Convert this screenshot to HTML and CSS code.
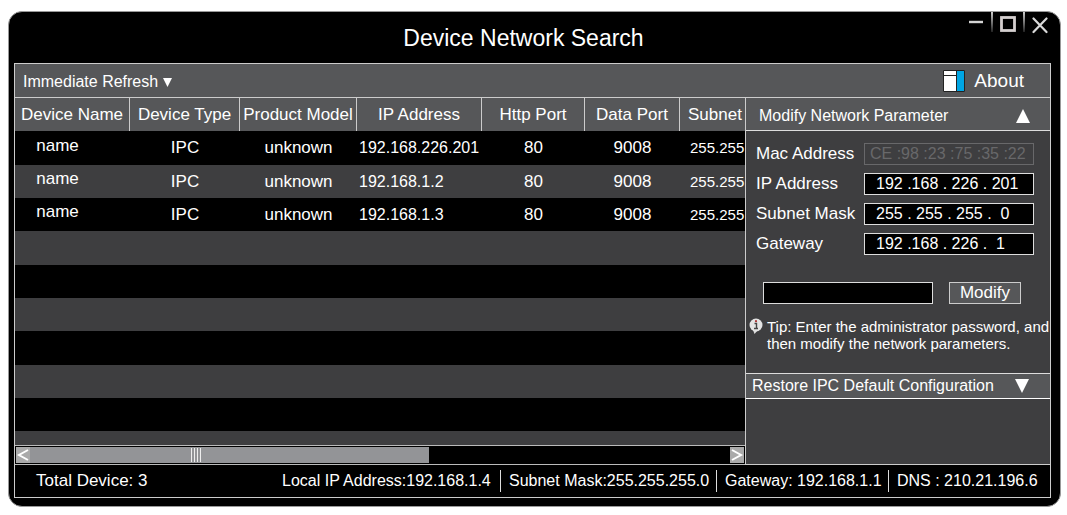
FILE: index.html
```html
<!DOCTYPE html>
<html lang="en">
<head>
<meta charset="utf-8">
<title>Device Network Search</title>
<link rel="stylesheet" href="styles.css">
</head>
<body>
<div class="window">
  <header class="titlebar">
    <h1 class="title">Device Network Search</h1>
    <div class="controls">
      <button class="control" aria-label="Minimize"><svg width="16" height="22" viewBox="0 0 16 22"><path d="M1 10h14" stroke="#d4d4d4" stroke-width="2.4"/></svg></button>
      <span class="divider"></span>
      <button class="control" aria-label="Maximize"><svg width="16" height="22" viewBox="0 0 16 22"><rect x="1.5" y="5.5" width="13" height="13" fill="none" stroke="#d4cfcf" stroke-width="2.8"/></svg></button>
      <span class="divider"></span>
      <button class="control" aria-label="Close"><svg width="16" height="22" viewBox="0 0 16 22"><path d="M1.500 6.500l13 13.500M14.500 6.500l-13 13.500" stroke="#d8d8d8" stroke-width="2.2" stroke-linecap="round"/></svg></button>
    </div>
  </header>
  <main class="frame">
    <div class="toolbar">
      <button class="refresh">Immediate Refresh <svg width="9" height="9" viewBox="0 0 9 9"><path d="M0 0h9L4.500 9z" fill="#fff"/></svg></button>
      <button class="about"><svg width="22" height="22" viewBox="0 0 22 22"><path d="M.5.5h21v21H.5z" fill="#fff" stroke="#222"/><path d="M14 1h7v20h-7z" fill="#00a5e3"/><path d="M13.500 1v20M1 5.500h12" stroke="#222"/></svg>About</button>
    </div>
    <div class="content">
      <section class="devices">
        <div class="table-view">
          <table class="table">
            <colgroup><col class="c-name"><col class="c-type"><col class="c-model"><col class="c-ip"><col class="c-http"><col class="c-data"><col class="c-mask"></colgroup>
            <thead><tr><th>Device Name</th><th>Device Type</th><th>Product Model</th><th>IP Address</th><th>Http Port</th><th>Data Port</th><th class="mask">Subnet</th></tr></thead>
            <tbody>
              <tr><td class="name">name</td><td>IPC</td><td>unknown</td><td class="ip">192.168.226.201</td><td>80</td><td>9008</td><td class="mask">255.255.255.0</td></tr>
              <tr><td class="name">name</td><td>IPC</td><td>unknown</td><td class="ip">192.168.1.2</td><td>80</td><td>9008</td><td class="mask">255.255.255.0</td></tr>
              <tr><td class="name">name</td><td>IPC</td><td>unknown</td><td class="ip">192.168.1.3</td><td>80</td><td>9008</td><td class="mask">255.255.255.0</td></tr>
              <tr><td colspan="7"></td></tr>
              <tr><td colspan="7"></td></tr>
              <tr><td colspan="7"></td></tr>
              <tr><td colspan="7"></td></tr>
              <tr><td colspan="7"></td></tr>
              <tr><td colspan="7"></td></tr>
            </tbody>
          </table>
        </div>
        <div class="scrollbar">
          <button class="arrow" aria-label="Scroll left"><svg width="14" height="16" viewBox="0 0 14 16"><path d="M12 3L3 8l9 5" fill="none" stroke="#fff" stroke-width="2"/></svg></button>
          <div class="track"><div class="thumb"><svg width="10" height="14" viewBox="0 0 10 14"><path d="M.5 0v14M3.500 0v14M6.500 0v14M9.500 0v14" stroke="#eee"/></svg></div></div>
          <button class="arrow" aria-label="Scroll right"><svg width="14" height="16" viewBox="0 0 14 16"><path d="M2 3l9 5-9 5" fill="none" stroke="#fff" stroke-width="2"/></svg></button>
        </div>
      </section>
      <aside class="side">
        <button class="panel-head modify-head">Modify Network Parameter<svg width="14" height="14" viewBox="0 0 14 14"><path d="M7 0l7 14H0z" fill="#fff"/></svg></button>
        <form class="form">
          <div class="fields">
            <label for="mac">Mac Address</label><input class="field mac" id="mac" value="CE :98 :23 :75 :35 :22" disabled>
            <label for="ip">IP Address</label><input class="field" id="ip" value="192 .168 . 226 . 201">
            <label for="mask">Subnet Mask</label><input class="field" id="mask" value="255 . 255 . 255 .  0">
            <label for="gateway">Gateway</label><input class="field" id="gateway" value="192 .168 . 226 .  1">
          </div>
          <div class="submit">
            <input class="field password" type="password" aria-label="Administrator password">
            <button class="modify" type="button">Modify</button>
          </div>
          <div class="tip">
            <svg width="14" height="17" viewBox="0 0 14 17"><path d="M4 12l1.500 4L9 12z" fill="#ddd"/><circle cx="7" cy="7" r="6.500" fill="#e4e4e4"/><path d="M5.500 5.500h2v5M5 10.500h4" fill="none" stroke="#444" stroke-width="1.400"/><circle cx="7" cy="3.200" r="1.100" fill="#a33"/></svg>
            <p class="tip-text">Tip: Enter the administrator password, and<br>then modify the network parameters.</p>
          </div>
        </form>
        <button class="panel-head restore-head">Restore IPC Default Configuration<svg width="14" height="14" viewBox="0 0 14 14"><path d="M0 0h14L7 14z" fill="#fff"/></svg></button>
      </aside>
    </div>
    <footer class="status">
      <span class="total">Total Device: 3</span>
      <span class="item">Local IP Address:192.168.1.4</span>
      <span class="item">Subnet Mask:255.255.255.0</span>
      <span class="item">Gateway: 192.168.1.1</span>
      <span class="item">DNS : 210.21.196.6</span>
    </footer>
  </main>
</div>
</body>
</html>
```
FILE: styles.css
```css
* { box-sizing: border-box; }

body {
  margin: 0;
  padding: 11px 6px 8px 8px;
  min-height: 100vh;
  display: flex;
  background: #fff;
  color: #fff;
  font: 16px/20px "Liberation Sans", Arial, sans-serif;
}

button, input {
  margin: 0;
  padding: 0;
  border: 0;
  background: none;
  color: inherit;
  font: inherit;
}

svg { display: block; flex: none; }

.window {
  flex: 1;
  min-width: 0;
  display: flex;
  flex-direction: column;
  padding: 0 9px 8px 5px;
  border: 1px solid #999;
  border-radius: 14px;
  background: #000;
}

.titlebar { display: grid; height: 51px; }
.title {
  grid-area: 1 / 1;
  align-self: center;
  margin: 0;
  padding-right: 18px;
  font-size: 23px;
  font-weight: normal;
  text-align: center;
}
.controls {
  grid-area: 1 / 1;
  justify-self: end;
  align-self: start;
  display: flex;
  gap: 7px;
  padding-right: 3px;
}
.divider {
  width: 2px;
  height: 20px;
  background: linear-gradient(#ccc, #222);
}

.frame {
  flex: 1;
  display: flex;
  flex-direction: column;
  border: 1px solid #ccc;
}

.toolbar {
  display: flex;
  justify-content: space-between;
  align-items: center;
  height: 34px;
  padding: 0 26px 0 8px;
  background: #565759;
  border-bottom: 1px solid #ccc;
}
.refresh { display: flex; align-items: center; gap: 5px; padding-top: 3px; }
.about { display: flex; align-items: center; gap: 9px; font-size: 19px; }

.content { flex: 1; display: flex; }

.devices { flex: 1; min-width: 0; display: flex; flex-direction: column; }
.table-view { flex: 1; overflow: hidden; background: #3e3e40; }
.table {
  width: 785px;
  table-layout: fixed;
  border-collapse: separate;
  border-spacing: 0;
}
.c-name { width: 115px; }
.c-type { width: 110px; }
.c-model { width: 117px; }
.c-ip { width: 125px; }
.c-http { width: 103px; }
.c-data { width: 95px; }
.c-mask { width: 120px; }
.table th, .table td {
  height: 33px;
  padding: 0;
  text-align: center;
  font-size: 17px;
  font-weight: normal;
  white-space: nowrap;
}
.table th {
  background: #565759;
  border-right: 1px solid #ccc;
}
.table tbody tr { background: #3e3e40; }
.table tbody tr:nth-child(odd) { background: #000; }
.table tbody tr:nth-child(3n + 1) td { height: 34px; }
.table .name { padding: 0 30px 5px 0; }
.table .ip { padding-left: 2px; text-align: left; font-size: 16px; }
.table .mask { padding-left: 8px; text-align: left; }
.table td.mask { padding-left: 10px; font-size: 15px; }

.scrollbar {
  display: flex;
  height: 20px;
  padding: 1px;
  border-top: 1px solid #bbb;
  border-bottom: 1px solid #bbb;
  background: #000;
}
.arrow { width: 14px; background: #aaa; }
.track { flex: 1; }
.thumb {
  display: flex;
  align-items: center;
  justify-content: center;
  width: 57%;
  height: 100%;
  padding-right: 68px;
  background: #939497;
}

.side {
  width: 305px;
  border-left: 1px solid #ccc;
  border-bottom: 1px solid #ccc;
  background: #3e3e40;
}
.panel-head {
  display: flex;
  align-items: center;
  justify-content: space-between;
  width: 100%;
  background: #565759;
}
.modify-head {
  height: 33px;
  padding: 3px 20px 0 13px;
  border-bottom: 1px solid #ddd;
}
.restore-head {
  height: 26px;
  padding: 0 21px 0 6px;
  border-top: 1px solid #ddd;
  border-bottom: 1px solid #fff;
}

.form { padding: 12px 0 21px; }
.fields {
  display: grid;
  grid-template-columns: 108px 170px;
  gap: 8px 0;
  align-items: center;
  padding-left: 10px;
  font-size: 17px;
}
.field {
  width: 170px;
  height: 22px;
  padding-left: 11px;
  border: 1px solid #ddd;
  background: #000;
  font-size: 16px;
}
.mac {
  padding-left: 5px;
  border-color: #68686a;
  background: #3e3e40;
  color: #68686a;
}
.submit {
  display: flex;
  gap: 16px;
  padding: 27px 0 0 17px;
}
.modify {
  width: 72px;
  height: 22px;
  border: 1px solid #ccc;
  background: #565759;
  font-size: 17px;
}
.tip { display: flex; gap: 4px; padding: 14px 0 0 3px; }
.tip-text {
  margin: 0;
  font-size: 15px;
  line-height: 17px;
  white-space: nowrap;
}

.status {
  display: grid;
  grid-template-columns: 1fr 227px 216px 172px 161px;
  align-items: center;
  height: 32px;
  background: #000;
  white-space: nowrap;
}
.total { padding-left: 21px; font-size: 17px; }
.item { padding-left: 8px; line-height: 22px; border-right: 1px solid #ddd; }
.item:last-child { border-right: 0; }
```
